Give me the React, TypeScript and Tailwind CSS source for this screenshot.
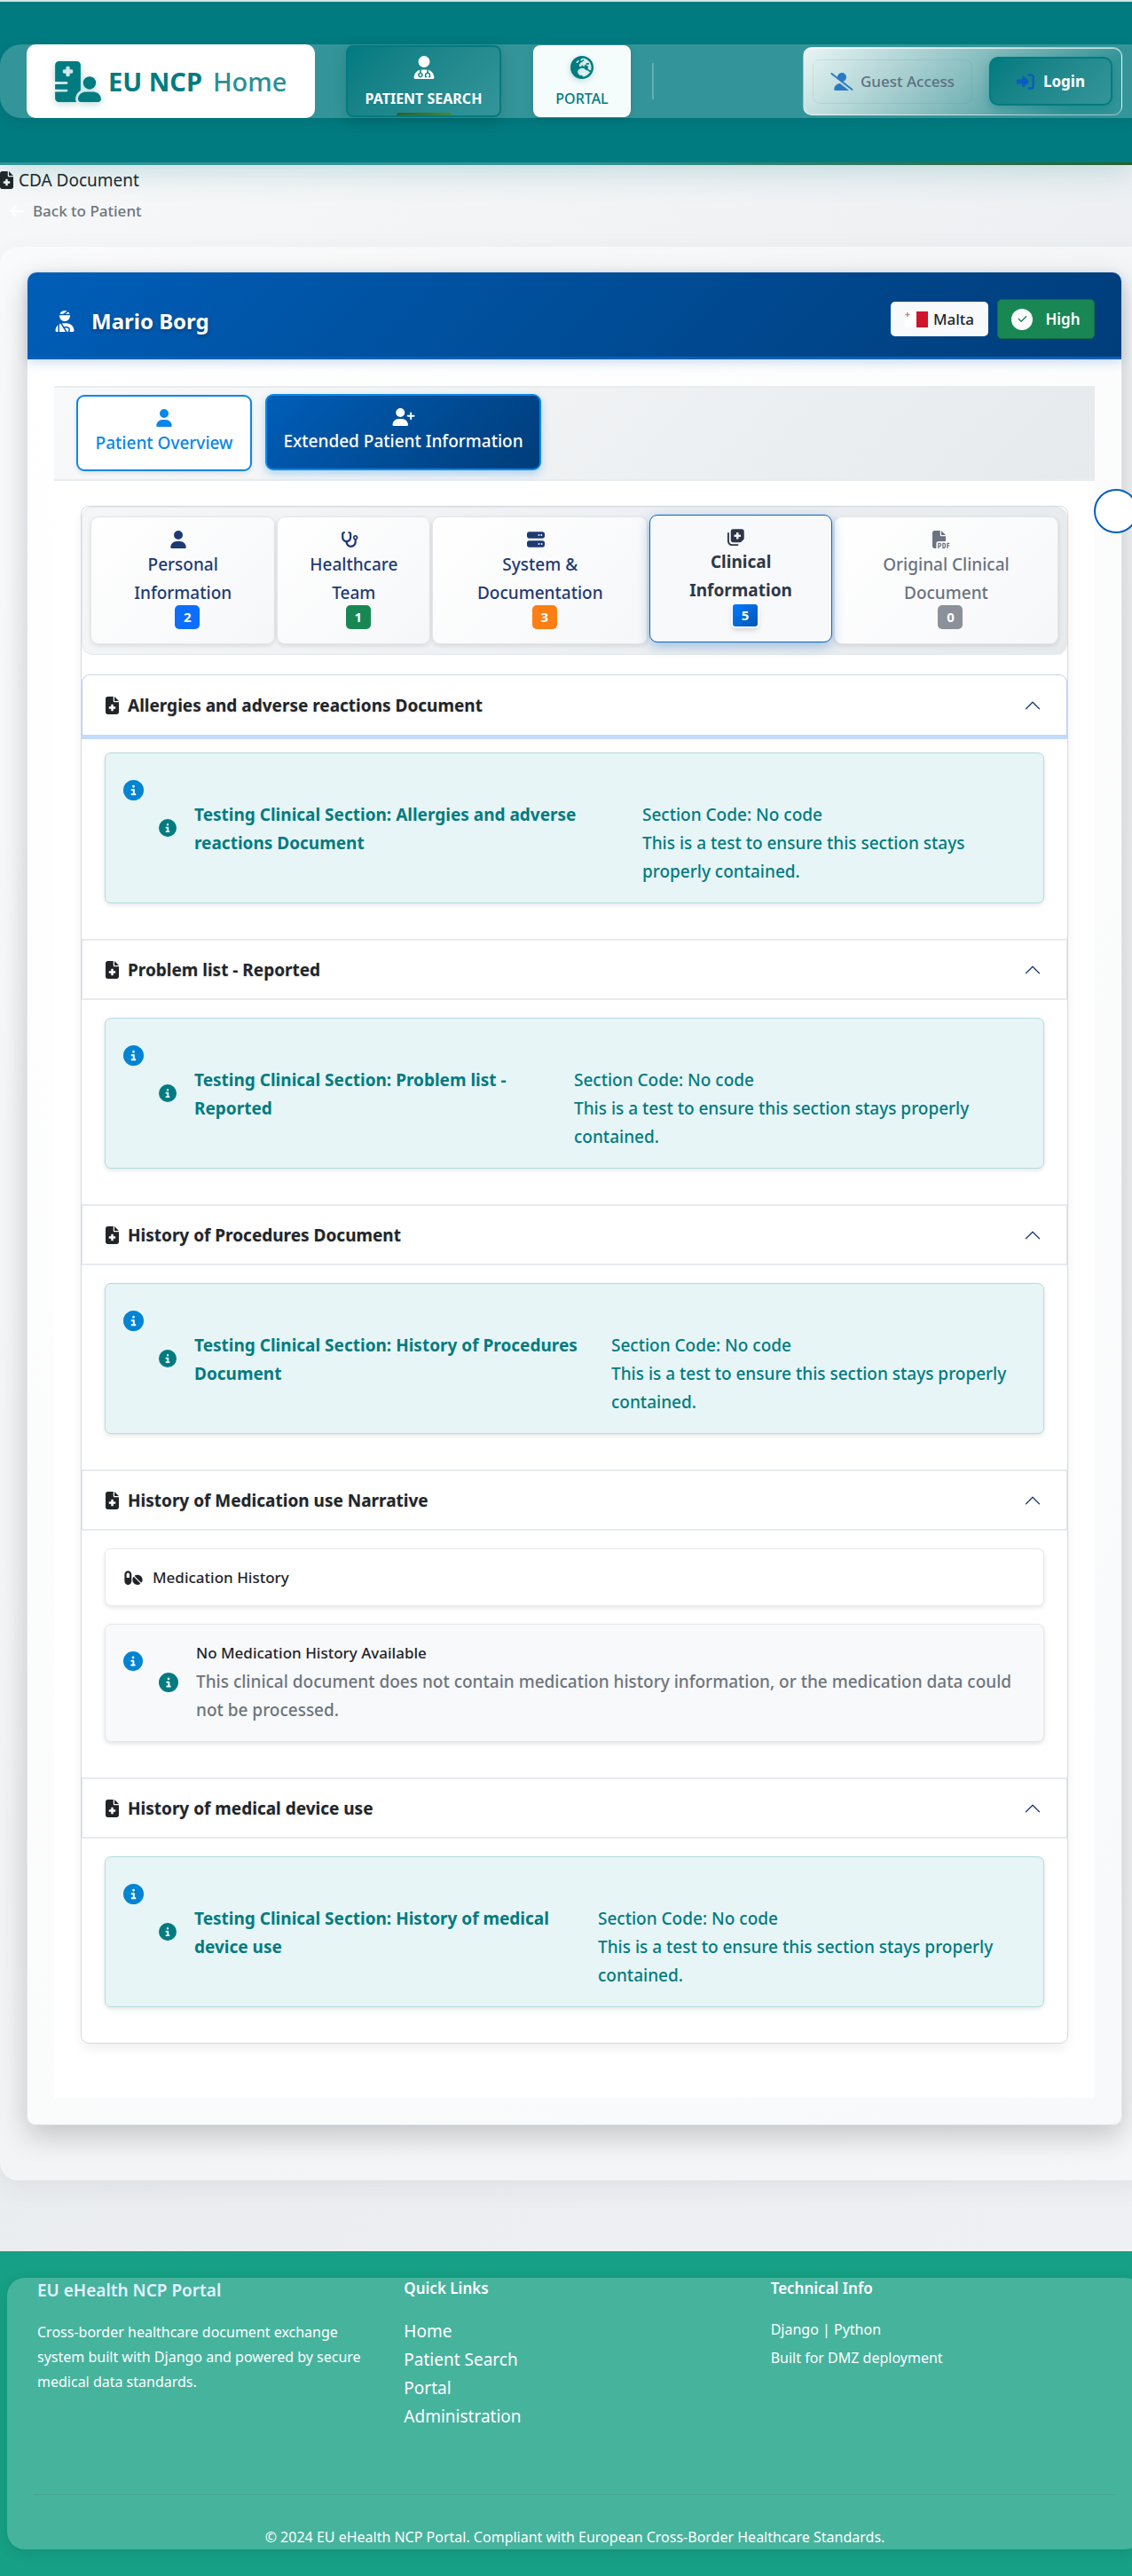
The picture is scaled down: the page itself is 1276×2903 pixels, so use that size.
import React from "react";
import type { ReactNode } from "react";
import {
  FaArrowLeft, FaCheck, FaCircleInfo, FaEarthEurope, FaFileMedical, FaFilePdf, FaHospitalUser,
  FaNotesMedical, FaPills, FaRightToBracket, FaServer, FaStethoscope, FaUser, FaUserDoctor,
  FaUserInjured, FaUserPlus, FaUserSlash,
} from "react-icons/fa6";
import { BsChevronUp } from "react-icons/bs";

function TopBar() {
  return (
    <header className="relative z-10 border-t-2 border-[#cfe5e6] bg-[#007b80] pt-12 shadow-[0_8px_32px_rgba(0,123,128,0.2)]">
      <div className="flex h-[83px] items-center rounded-l-3xl bg-[#339599] pr-[11px] pl-[30px] shadow-[0_4px_16px_rgba(0,0,0,0.08)]">
        <a href="#home" className="flex h-full w-[325px] items-center rounded-[10px] bg-white pl-8 text-[29px] text-[#007b80]">
          <FaHospitalUser className="h-[46px] w-[52px] shrink-0 drop-shadow-[0_2px_4px_rgba(0,123,128,0.3)]" />
          <span className="ml-2 font-bold whitespace-nowrap">EU NCP</span>
          <span className="ml-3 font-medium text-[#2a8f93]">Home</span>
        </a>
        <nav className="ml-[35px] flex h-[81px] items-stretch" aria-label="Main">
          <a href="#search" className="relative flex w-[175px] flex-col items-center rounded-[8px] border-2 border-[#007b80] bg-linear-135 from-[#007b80] to-[#339599] pt-2.5 text-base font-bold whitespace-nowrap text-white shadow-[0_4px_16px_rgba(0,0,0,0.15)]">
            <FaUserDoctor className="size-[26px]" />
            <span className="mt-2.5 leading-6">PATIENT SEARCH</span>
            <span className="absolute bottom-0 left-1/2 h-[3px] w-[62px] -translate-x-1/2 rounded-t bg-linear-to-r from-[#2b5f2b] to-[#45893c]" />
          </a>
          <a href="#portal" className="ml-9 flex w-[110px] flex-col items-center rounded-[8px] border-2 border-white bg-[#f5fcfc] pt-2.5 text-base font-medium text-[#007b80] shadow-[0_2px_8px_rgba(0,0,0,0.1)]">
            <FaEarthEurope className="size-[26px] drop-shadow-[0_2px_3px_rgba(0,123,128,0.3)]" />
            <span className="mt-2.5 leading-6">PORTAL</span>
          </a>
        </nav>
        <span className="ml-6 h-[41px] w-0.5 bg-[#66b0b3]" />
        <div className="ml-auto flex h-[77px] w-[360px] items-center rounded-[10px] border border-white/50 bg-linear-135 from-[#eaf5f5] from-0% to-[#339599] to-85% pr-2.5 pl-2.5 shadow-[inset_0_1px_0_rgba(255,255,255,0.7)]">
          <span className="flex h-[50px] w-[180px] items-center justify-center gap-2 rounded-[8px] border border-[#007b80]/10 text-[17px] font-medium whitespace-nowrap text-[#5c7080]">
            <FaUserSlash className="h-5 w-[26px] text-[#2a7ac4]" />
            Guest Access
          </span>
          <button type="button" className="ml-auto flex h-[55px] w-[139px] items-center justify-center gap-2.5 rounded-[10px] border-2 border-[#007b80] bg-linear-135 from-[#007b80] to-[#339599] text-[17px] font-bold text-white shadow-[0_4px_12px_rgba(0,123,128,0.4)]">
            <FaRightToBracket className="size-5 text-[#0b5cc0]" />
            Login
          </button>
        </div>
      </div>
      <div className="mt-[50px] h-[3px] bg-linear-to-r from-[#339599] from-50% to-[#2b5f2b]" />
    </header>
  );
}

function PatientHeader() {
  return (
    <div className="relative flex h-[98px] items-center rounded-t-[10px] border-b-3 border-[#0b5fb5] bg-linear-135 from-[#005eb8] to-[#003d7a] px-[30px] pt-2.5 shadow-[0_4px_12px_rgba(0,94,184,0.2)]">
      <FaUserInjured className="mt-1 size-6 text-white" />
      <h1 className="mt-1 ml-[18px] text-2xl font-bold text-white text-shadow-[0_2px_4px_rgba(0,0,0,0.3)]">Mario Borg</h1>
      <span className="ml-auto flex h-[39px] w-[110px] items-center justify-center gap-1.5 rounded-[5px] bg-[#f8f9fb] text-[17px] font-medium text-[#212529]">
        <svg viewBox="0 0 26 18" className="h-[18px] w-[26px]" role="img" aria-label="Flag of Malta">
          <rect width="13" height="18" fill="#fff" />
          <rect x="13" width="13" height="18" fill="#cf142b" />
          <path d="M3 1v5M.5 3.5h5" stroke="#b98c8c" strokeWidth="1.4" />
        </svg>
        Malta
      </span>
      <span className="ml-2.5 flex h-[45px] w-[110px] items-center justify-center gap-3.5 rounded-[5px] border border-[#146c43] bg-[#198754] text-[17px] font-semibold text-white">
        <span className="grid size-6 place-items-center rounded-full bg-white">
          <FaCheck className="size-[11px] text-[#198754]" />
        </span>
        High
      </span>
    </div>
  );
}

type Tab = { icon: ReactNode; label: string[]; count: number; badge: string; size: string; text: string };

const tabs: Tab[] = [
  { icon: <FaUser />, label: ["Personal", "Information"], count: 2, badge: "bg-[#0d6efd]", size: "grow-[208]", text: "text-[#1e3a73]" },
  { icon: <FaStethoscope />, label: ["Healthcare", "Team"], count: 1, badge: "bg-[#198754]", size: "grow-[172]", text: "text-[#1e3a73]" },
  { icon: <FaServer />, label: ["System &", "Documentation"], count: 3, badge: "bg-[#fd7e14]", size: "grow-[243]", text: "text-[#1e3a73]" },
  { icon: <FaNotesMedical />, label: ["Clinical", "Information"], count: 5, badge: "h-[29px] min-w-8 border-2 border-white bg-linear-135 from-[#007bff] to-[#0056b3] shadow-md", size: "grow-[205]", text: "text-[#2d3748]" },
  { icon: <FaFilePdf />, label: ["Original Clinical", "Document"], count: 0, badge: "bg-[#8a9199]", size: "grow-[253]", text: "text-[#6b7280]" },
];

function ClinicalTabs() {
  return (
    <div role="tablist" className="flex h-[167px] gap-0.5 rounded-xl border border-[#e4e8eb] bg-linear-135 from-[#f5f6f8] to-[#e6eaed] px-[9px] pt-2.5">
      {tabs.map((t) => {
        const active = t.count === 5;
        return (
          <button
            key={t.label[0]}
            type="button"
            role="tab"
            aria-selected={active}
            className={`flex h-36 basis-0 flex-col items-center rounded-[9px] text-[19px] leading-8 whitespace-nowrap ${t.size} ${t.text} ${
              active
                ? "z-10 -mt-0.5 border border-[#0b62c0] bg-[#f8f9fb] pt-3.5 font-bold shadow-[0_4px_14px_rgba(0,94,184,0.35)]"
                : "border border-[#e3e6e9] bg-linear-135 from-white to-[#f6f7f9] pt-[15px] font-medium shadow-[0_2px_5px_rgba(0,0,0,0.1)]"
            }`}
          >
            <span className="-ml-2.5 text-xl leading-none">{t.icon}</span>
            <span className="mt-0.5">{t.label[0]}</span>
            <span>{t.label[1]}</span>
            <span className={`-mt-0.5 ml-2.5 grid place-items-center rounded-[5px] text-[15px] leading-none font-bold text-white ${active ? "" : "h-[27px] min-w-7"} ${t.badge}`}>{t.count}</span>
          </button>
        );
      })}
    </div>
  );
}

function SectionHeader({ title, first = false }: { title: string; first?: boolean }) {
  return (
    <h2>
      <button
        type="button"
        aria-expanded="true"
        className={`flex w-full items-center border-x pr-7 pl-[26px] text-left text-[19px] font-bold text-[#212529] text-shadow-[0_1px_2px_rgba(0,0,0,0.15)] ${
          first
            ? "h-[73px] rounded-t-[9px] border-t border-b-5 border-x-[#b9cff0] border-t-[#c5d5ee] border-b-[#c2dbfe]"
            : "h-[69px] border-y-2 border-x-[#e0e4e8] border-y-[#e8ebee]"
        }`}
      >
        <FaFileMedical className="h-5 w-[15px] shrink-0" />
        <span className="mt-0.5 ml-2.5 grow">{title}</span>
        <BsChevronUp className="size-5 text-[#1e3a73]" />
      </button>
    </h2>
  );
}

function TestSection({ title, lines, body, columns, first }: { title: string; lines: string[]; body: string[]; columns: string; first?: boolean }) {
  return (
    <section>
      <SectionHeader title={title} first={first} />
      <div className={`px-[26px] pb-10 ${first ? "pt-[15px]" : "pt-5"}`}>
        <div className="flex h-[170px] rounded-[7px] border border-[#b3dcdd] bg-[#e7f5f7] pl-5 text-[19px] leading-8 text-[#007b80] shadow-[0_2px_5px_rgba(0,0,0,0.1)]">
          <FaCircleInfo className="mt-[30px] size-[23px] shrink-0 text-[#0284d3]" />
          <FaCircleInfo className="mt-[74px] ml-[17px] size-5 shrink-0" />
          <div className={`mt-[53px] ml-5 grid grow content-start whitespace-nowrap ${columns}`}>
            <strong className="font-bold">{lines[0]}<br />{lines[1]}</strong>
            <p className="font-medium">Section Code: No code<br />{body[0]}<br />{body[1]}</p>
          </div>
        </div>
      </div>
    </section>
  );
}

function MedicationSection() {
  return (
    <section>
      <SectionHeader title="History of Medication use Narrative" />
      <div className="px-[26px] pt-5 pb-10">
        <h3 className="flex h-[65px] items-center gap-2.5 rounded-[7px] border border-[#e6e9ec] bg-white px-5 text-[17px] font-medium text-[#212529] shadow-[0_2px_5px_rgba(0,0,0,0.1)]">
          <FaPills className="h-[18px] w-[23px]" />
          Medication History
        </h3>
        <div className="mt-5 flex h-[133px] rounded-[7px] border border-[#e6e9ec] bg-[#f8f9fb] pr-7 pl-5 text-[19px] leading-8 shadow-[0_2px_5px_rgba(0,0,0,0.12)]">
          <FaCircleInfo className="mt-[30px] size-[22px] shrink-0 text-[#0284d3]" />
          <FaCircleInfo className="mt-[54px] ml-[18px] size-[22px] shrink-0 text-[#007b80]" />
          <div className="mt-4 ml-5">
            <h4 className="text-[17px] leading-8 font-medium text-[#212529]">No Medication History Available</h4>
            <p className="font-medium text-[#6c757d]">This clinical document does not contain medication history information, or the medication data could not be processed.</p>
          </div>
        </div>
      </div>
    </section>
  );
}

function Footer() {
  return (
    <footer className="bg-[#16a085] py-[30px] pl-2 text-white">
      <div className="-mr-3 h-[306px] rounded-[20px] bg-[#46b39d] px-[30px] shadow-[0_4px_16px_rgba(0,0,0,0.1)]">
        <div className="h-[245px] border-b border-[#4aa292] pl-1">
          <div className="-mr-6 grid grid-cols-3">
            <div>
              <h2 className="text-[19px] leading-7 font-semibold text-[#e3f2fd]">EU eHealth NCP Portal</h2>
              <p className="mt-[19px] text-base leading-7">Cross-border healthcare document exchange<br />system built with Django and powered by secure<br />medical data standards.</p>
            </div>
            <nav aria-label="Quick Links">
              <h3 className="text-[17px] leading-6 font-semibold">Quick Links</h3>
              <ul className="mt-5 text-[19px] leading-8">
                <li><a href="#home">Home</a></li>
                <li><a href="#search">Patient Search</a></li>
                <li><a href="#portal">Portal</a></li>
                <li><a href="#admin">Administration</a></li>
              </ul>
            </nav>
            <div>
              <h3 className="text-[17px] leading-6 font-semibold">Technical Info</h3>
              <p className="mt-4.5 text-base leading-8">Django | Python<br />Built for DMZ deployment</p>
            </div>
          </div>
        </div>
        <p className="mt-[33px] text-center text-base leading-7">© 2024 EU eHealth NCP Portal. Compliant with European Cross-Border Healthcare Standards.</p>
      </div>
    </footer>
  );
}

export default function App() {
  const stays = ["This is a test to ensure this section stays properly", "contained."];
  return (
    <div className="overflow-hidden bg-linear-135 from-[#f8f9fa] via-[#e9ecef] to-[#f0f1f4] font-['Noto_Sans','Open_Sans',sans-serif]">
      <TopBar />
      <div className="h-[92px]">
        <div className="flex h-[34px] items-center gap-1.5 text-[19px] text-[#212529]">
          <FaFileMedical className="h-5 w-[15px]" />
          CDA Document
        </div>
        <a href="#patient" className="flex h-9 items-center gap-[9px] pl-2.5 text-[17px] font-medium text-[#6c757d]">
          <FaArrowLeft className="size-[18px] text-white" />
          Back to Patient
        </a>
      </div>
      <main className="relative -mr-5 rounded-[20px] bg-white/40 pt-7 pr-[31px] pb-[62px] pl-[30px] shadow-[0_8px_32px_rgba(0,0,0,0.06)]">
        <div className="rounded-[10px] border border-[#dfe5ec] bg-linear-135 from-white to-[#f8f9fa] shadow-[0_12px_32px_rgba(0,0,0,0.2)]">
          <PatientHeader />
          <div className="px-[30px] pt-[30px] pb-[30px]">
            <div className="flex h-[107px] items-start gap-[15px] border-y-2 border-[#e9ecef] bg-linear-135 from-[#f8f9fa] to-[#e6eaed] px-[25px] pt-2 text-[19px] leading-8 font-medium">
              <button type="button" className="flex h-[86px] w-[198px] flex-col items-center rounded-[9px] border-2 border-[#0a87e8] bg-white pt-3.5 whitespace-nowrap text-[#0a87e8] shadow-[0_2px_5px_rgba(0,0,0,0.1)]">
                <FaUser className="size-5" />
                <span className="mt-0.5">Patient Overview</span>
              </button>
              <button type="button" className="-mt-px flex h-[86px] w-[311px] flex-col items-center rounded-[9px] border-2 border-[#0a87e8] bg-linear-135 from-[#005eb8] to-[#003d7a] pt-3.5 whitespace-nowrap text-white shadow-[0_4px_10px_rgba(10,135,232,0.3)]">
                <FaUserPlus className="h-5 w-[26px]" />
                <span className="mt-px">Extended Patient Information</span>
              </button>
            </div>
            <div className="bg-white px-[30px] pt-7 pb-[61px]">
              <div className="rounded-[9px] border border-[#d5dae1] shadow-[0_6px_12px_rgba(0,0,0,0.06)]">
                <ClinicalTabs />
                <div className="mt-[22px]">
                  <TestSection first title="Allergies and adverse reactions Document" lines={["Testing Clinical Section: Allergies and adverse", "reactions Document"]} body={["This is a test to ensure this section stays", "properly contained."]} columns="grid-cols-[505px_1fr]" />
                  <TestSection title="Problem list - Reported" lines={["Testing Clinical Section: Problem list -", "Reported"]} body={stays} columns="grid-cols-[428px_1fr]" />
                  <TestSection title="History of Procedures Document" lines={["Testing Clinical Section: History of Procedures", "Document"]} body={stays} columns="grid-cols-[470px_1fr]" />
                  <MedicationSection />
                  <TestSection title="History of medical device use" lines={["Testing Clinical Section: History of medical", "device use"]} body={stays} columns="grid-cols-[455px_1fr]" />
                </div>
              </div>
            </div>
          </div>
        </div>
        <button type="button" aria-label="Quick actions" className="absolute top-[273px] right-[13px] size-[50px] rounded-full border-2 border-[#005eb8] bg-white" />
      </main>
      <div className="h-20" />
      <Footer />
    </div>
  );
}
